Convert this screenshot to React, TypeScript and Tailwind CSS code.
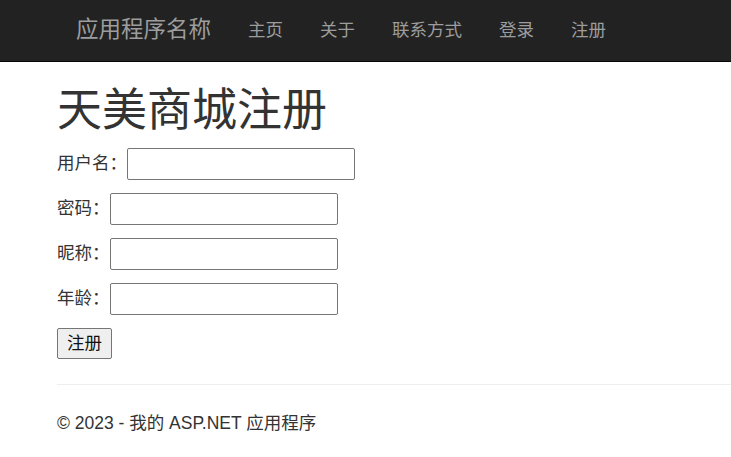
const font = "font-['Liberation_Sans','Noto_Sans_CJK_SC',sans-serif]";

const navLinks = ["主页", "关于", "联系方式", "登录", "注册"];

const fields = [
  { label: "用户名：", type: "text" },
  { label: "密码：", type: "password" },
  { label: "昵称：", type: "text" },
  { label: "年龄：", type: "text" },
];

function Navbar() {
  return (
    <nav className="h-[62px] bg-[#222222] border-b border-[#080808]">
      <div className="flex h-full items-center pl-[76px]">
        <a className="text-[22.5px] text-[#9d9d9d] leading-none">应用程序名称</a>
        <ul className="ml-[18.5px] flex items-center">
          {navLinks.map((link) => (
            <li key={link} className="px-[18.5px] text-[17.5px] text-[#9d9d9d] leading-none">
              {link}
            </li>
          ))}
        </ul>
      </div>
    </nav>
  );
}

export default function App() {
  return (
    <div className={`${font} min-h-[457px] bg-white text-[#333333]`}>
      <Navbar />
      <div className="pl-[57px]">
        <h1 className="mt-[24px] text-[45px] leading-[50px] font-normal">天美商城注册</h1>
        <form className="mt-[12px] flex flex-col gap-[13px]" onSubmit={(e) => e.preventDefault()}>
          {fields.map((f) => (
            <div key={f.label} className="flex items-center">
              <label className="text-[17.5px] leading-none">{f.label}</label>
              <input
                type={f.type}
                className="h-[32px] w-[228px] rounded-[2px] border border-[#767676] bg-white"
              />
            </div>
          ))}
          <div>
            <button
              type="submit"
              className="h-[31px] w-[55px] rounded-[2px] border border-[#767676] bg-[#efefef] text-[17.5px] leading-none text-[#111]"
            >
              注册
            </button>
          </div>
        </form>
        <hr className="mt-[25px] border-t border-[#eeeeee]" />
        <footer className="pt-[26px]">
          <p className="text-[17.5px] leading-[24px]">© 2023 - 我的 ASP.NET 应用程序</p>
        </footer>
      </div>
    </div>
  );
}
